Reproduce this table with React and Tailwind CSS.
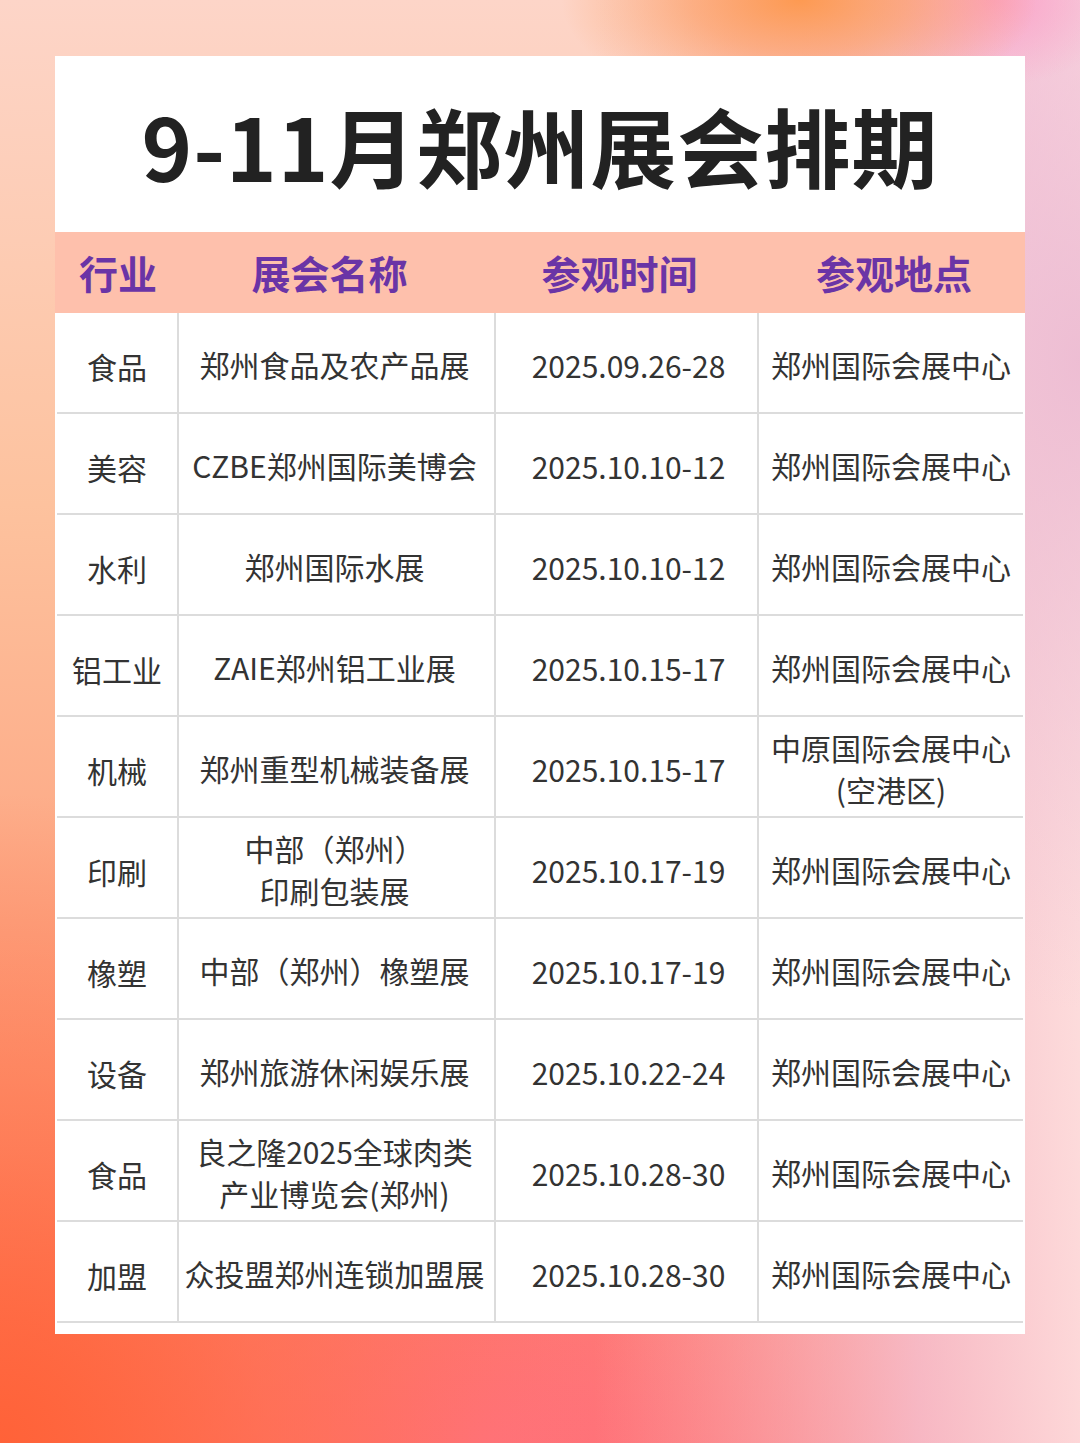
import React from 'react';

const rows = [
  { industry: '食品', name: ['郑州食品及农产品展'], date: '2025.09.26-28', place: ['郑州国际会展中心'] },
  { industry: '美容', name: ['CZBE郑州国际美博会'], date: '2025.10.10-12', place: ['郑州国际会展中心'] },
  { industry: '水利', name: ['郑州国际水展'], date: '2025.10.10-12', place: ['郑州国际会展中心'] },
  { industry: '铝工业', name: ['ZAIE郑州铝工业展'], date: '2025.10.15-17', place: ['郑州国际会展中心'] },
  { industry: '机械', name: ['郑州重型机械装备展'], date: '2025.10.15-17', place: ['中原国际会展中心', '(空港区)'] },
  { industry: '印刷', name: ['中部（郑州）', '印刷包装展'], date: '2025.10.17-19', place: ['郑州国际会展中心'] },
  { industry: '橡塑', name: ['中部（郑州）橡塑展'], date: '2025.10.17-19', place: ['郑州国际会展中心'] },
  { industry: '设备', name: ['郑州旅游休闲娱乐展'], date: '2025.10.22-24', place: ['郑州国际会展中心'] },
  { industry: '食品', name: ['良之隆2025全球肉类', '产业博览会(郑州)'], date: '2025.10.28-30', place: ['郑州国际会展中心'] },
  { industry: '加盟', name: ['众投盟郑州连锁加盟展'], date: '2025.10.28-30', place: ['郑州国际会展中心'] },
];

const Lines = ({ lines }) => (
  <div className="flex flex-col items-center leading-[42px] whitespace-nowrap">
    {lines.map((l, i) => <span key={i}>{l}</span>)}
  </div>
);

export default function App() {
  return (
    <div
      className="relative w-[1080px] h-[1443px] pt-[56px] pl-[55px] bg-[image:radial-gradient(ellipse_55%_45%_at_0%_100%,#ff6238_0%,rgba(255,110,70,0.6)_45%,transparent_100%),radial-gradient(ellipse_45%_25%_at_45%_100%,#ff7382_0%,transparent_100%),radial-gradient(ellipse_35%_30%_at_98%_0%,#f8a2ca_0%,transparent_100%),linear-gradient(to_bottom,#fdd5c8_0%,#fdc29e_35%,#fd9b78_75%,#ff7058_100%)]"
      style={{ fontFamily: '"Noto Sans CJK SC", "Noto Sans", sans-serif' }}
    >
      <div className="absolute inset-0 pointer-events-none bg-[image:radial-gradient(ellipse_22%_8%_at_74%_0%,#fd9a52_0%,rgba(253,160,100,0.7)_45%,transparent_100%),radial-gradient(ellipse_12%_6%_at_92%_0%,#fba3c8_0%,transparent_100%),radial-gradient(ellipse_30%_45%_at_100%_25%,rgba(236,186,210,0.9)_0%,transparent_100%),linear-gradient(to_right,transparent_0%,transparent_55%,rgba(245,200,220,0.8)_85%,rgba(253,226,230,0.9)_100%)]" />
      <div className="relative w-[970px] bg-white">
        <div className="h-[176px] flex items-center justify-center">
          <h1 className="text-[86px] font-bold text-[#222222] tracking-[1px] leading-none pt-[2px]">9-11月郑州展会排期</h1>
        </div>
        <div className="h-[81px] bg-[#fec0ac] flex items-center text-[39px] font-bold text-[#6a34a6] leading-none">
          <div className="w-[124px] text-center pl-[2px]">行业</div>
          <div className="w-[317px] text-center -ml-[8px]">展会名称</div>
          <div className="w-[263px] text-center">参观时间</div>
          <div className="flex-1 text-center pl-[12px]">参观地点</div>
        </div>
        <div className="px-[2px] pb-[11px]">
          {rows.map((r, i) => (
            <div key={i} className="h-[101px] flex border-b-2 border-[#dcdcdc] text-[30px] text-[#333333]">
              <div className="w-[122px] border-r-2 border-[#dcdcdc] flex items-center justify-center pt-[6px]">
                <Lines lines={[r.industry]} />
              </div>
              <div className="w-[317px] border-r-2 border-[#dcdcdc] flex items-center justify-center pt-[2px] pr-[4px]">
                <Lines lines={r.name} />
              </div>
              <div className="w-[263px] border-r-2 border-[#dcdcdc] flex items-center justify-center pt-[4px] pl-[4px]">
                <Lines lines={[r.date]} />
              </div>
              <div className="flex-1 flex items-center justify-center pt-[2px]">
                <Lines lines={r.place} />
              </div>
            </div>
          ))}
        </div>
      </div>
    </div>
  );
}
